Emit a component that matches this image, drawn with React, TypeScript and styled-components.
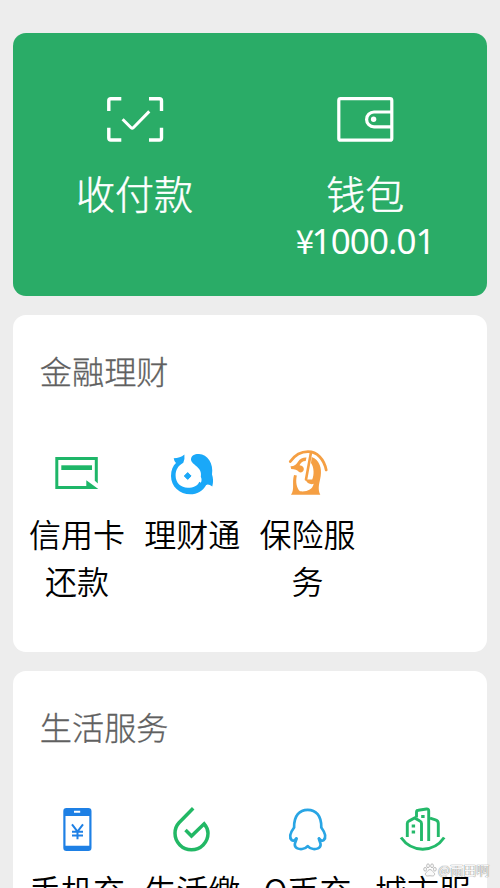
import React from "react";
import styled, { createGlobalStyle } from "styled-components";

const GlobalStyle = createGlobalStyle`
  * { box-sizing: border-box; }
  html, body { margin: 0; padding: 0; background: #ededed; }
  body { font-family: "Noto Sans CJK SC", sans-serif; overflow: hidden; }
`;

const Page = styled.main`
  position: relative;
  width: 500px;
  height: 888px;
  overflow: hidden;
  padding: 33px 13.4px 0 13.3px;
  background: #ededed;
  display: flex;
  flex-direction: column;
  gap: 19px;
`;

const PayCard = styled.section`
  flex: none;
  height: 263.3px;
  padding: 58px 6px 0;
  border-radius: 13px;
  background: #2aac67;
  color: #fff;
  display: grid;
  grid-template-columns: 1fr 1fr;
`;

const PayItem = styled.div`
  display: flex;
  flex-direction: column;
  align-items: center;
`;

const PayLabel = styled.div`
  margin-top: 17px;
  font-size: 39px;
  line-height: 52px;
  font-weight: 300;
  -webkit-text-stroke: 0.5px currentColor;
`;

const Balance = styled.div`
  display: flex;
  align-items: baseline;
  height: 42px;
  font-family: "Noto Sans", sans-serif;
  font-size: 35px;
  line-height: 42px;
  padding-top: 1px;
  letter-spacing: -0.9px;
`;

const Currency = styled.span`
  font-family: "Noto Sans CJK SC", sans-serif;
  font-size: 33px;
  letter-spacing: -2.6px;
`;

const Card = styled.section<{ $height: number }>`
  flex: none;
  height: ${(p) => p.$height}px;
  padding: 31px 6px 0;
  border-radius: 13px;
  background: #fff;
`;

const Title = styled.h2`
  margin: 0 0 0 20.5px;
  font-size: 32.2px;
  line-height: 48px;
  font-weight: 300;
  color: #606060;
  -webkit-text-stroke: 0.3px currentColor;
`;

const Grid = styled.div`
  margin-top: 51px;
  display: grid;
  grid-template-columns: repeat(4, 1fr);
`;

const Service = styled.div`
  display: flex;
  flex-direction: column;
  align-items: center;
`;

const ServiceLabel = styled.div`
  margin-top: 7px;
  width: 100px;
  text-align: center;
  font-size: 32px;
  line-height: 46.5px;
  color: #000;
  font-weight: 350;
`;

const Watermark = styled.div`
  position: absolute;
  left: 423px;
  top: 860px;
  display: flex;
  align-items: center;
  gap: 1px;
  font-size: 13px;
  line-height: 20px;
  white-space: nowrap;
  color: rgba(255, 255, 255, 0.95);
  text-shadow: 0 0 1px rgba(90, 90, 90, 0.8), 0 0 1px rgba(90, 90, 90, 0.6);
`;

const ScanIcon = () => (
  <svg width="58" height="58" viewBox="106 91 58 58" fill="none" stroke="#fff" strokeWidth="3.4">
    <path d="M121.3 98.7h-10.5q-2 0-2 2v10.3M149 98.7h10.5q2 0 2 2v10.3M121.3 140h-10.5q-2 0-2-2v-10.3M149 140h10.5q2 0 2-2v-10.3" />
    <path d="M122.6 119.2l8.5 8.5q1.1 1 2.2 0l16-16.3" strokeWidth="3" />
  </svg>
);

const WalletIcon = () => (
  <svg width="58" height="58" viewBox="336 91 58 58" fill="none" stroke="#fff" strokeWidth="3.2">
    <rect x="338.8" y="98.6" width="53" height="41.6" rx="1.8" />
    <path d="M391.5 112h-17.5a7.4 7.4 0 0 0 0 14.8h17.5" />
    <circle cx="373.6" cy="119.3" r="2.7" fill="#fff" stroke="none" />
  </svg>
);

const CreditIcon = () => (
  <svg width="50" height="58" viewBox="52 445 50 58" fill="#1eb668">
    <path d="M55.3 457H97.8V483.5L94.8 480.8V460H58.3V486H86.3V480.2L98.3 489H55.3z" />
    <path d="M61.3 465.3H92v4.7H61.3z" />
  </svg>
);

const WealthIcon = () => (
  <svg width="50" height="58" viewBox="168 445 50 58" fill="#1aa8f8">
    <path d="M174.7 458.3Q181 458.3 185.4 454.5Q186 459 184.3 462.7C179 465.5 176.6 470 176.6 475.5C176.6 483 182 487.7 188.7 487.7C194.5 487.7 198.7 485.8 200.3 481.7L201.9 482.8C202.8 481 202.8 478.5 201.8 476.8C204 467 192.3 465 192 459.5C192 455.5 196 453.8 200 454C208.5 454.5 214.8 463.5 213 474.5Q215 480 213.3 486.5Q209.5 483.7 207.2 485C203.5 491.5 198 494.3 191.5 494.3C180.5 494.3 172 486.5 172 476C172 470 174 465.8 177 463Q175 461 174.7 458.3z" />
    <path d="M188.7 472.6l3.4 3.4-3.4 3.4-3.4-3.4z" stroke="#1aa8f8" strokeWidth="1" strokeLinejoin="round" />
  </svg>
);

const InsuranceIcon = () => (
  <svg width="50" height="58" viewBox="283 445 50 58" fill="none" stroke="#f59f43" strokeLinecap="round">
    <path d="M290.3 461.5C295 455 301 451.7 308 451.7C317 451.7 324 459 326.2 470" strokeWidth="2.8" />
    <path d="M310.8 453.5L306 479.5" strokeWidth="2.6" />
    <path d="M290.5 466.3C294 466.5 296.5 464.3 298 461.7C300 458.5 303.5 457.2 306.5 457.5L305.7 461C302.5 461 300.5 463 299.5 465.3C302.5 465.5 304.3 467.5 303.7 470C303 472.3 300.5 473.3 298.5 471.5C297.5 469.8 294.5 469.2 291.2 469z" fill="#f59f43" stroke="none" />
    <path d="M311.7 457C319.5 460 322 468 320.7 476C319.5 483.5 317.3 488.5 320.3 494.7H291C295 489.5 291.7 483 294 475L296.8 475.5C295.5 482 296.5 488 300 491.3C307 492 312.5 489.7 313.7 483.8C310.5 485 306.5 483 305.7 479.5H312.2C314.2 475 314.2 467.5 311 463z" fill="#f59f43" stroke="none" />
  </svg>
);

const PhoneIcon = () => (
  <svg width="50" height="58" viewBox="52 800 50 58">
    <path fillRule="evenodd" d="M66.5 807h21.8q3.2 0 3.2 3.2v36.6q0 3.2-3.2 3.2H66.5q-3.2 0-3.2-3.2v-36.6q0-3.2 3.2-3.2zM65.5 815v29.8h23.8V815zM74 809.8h6.2v2H74z" fill="#1e80e5" />
    <path d="M72 823.3l5.5 7.3 5.5-7.3M77.5 830.5v7.7M72 830.7h11M72 834.4h11" fill="none" stroke="#1e80e5" strokeWidth="2" />
  </svg>
);

const DropIcon = () => (
  <svg width="50" height="58" viewBox="168 800 50 58" fill="none" stroke="#22b865" strokeWidth="3.5">
    <path d="M194.2 807.3L180 821.7c-3.2 3.4-4 6.5-4 10.6a16.5 16.5 0 1 0 33 0c0-3.8-1.3-6.6-3.8-9.5L192.5 835l-6-6" />
  </svg>
);

const PenguinIcon = () => (
  <svg width="50" height="58" viewBox="283 800 50 58" fill="none" stroke="#29a5e4" strokeWidth="2.7" strokeLinecap="round" strokeLinejoin="round">
    <path d="M296.3 837.5c-1.2 1.8-3.2 2.7-4.5 1.7-2.8-2.6-1.4-7.7 2.3-12.7-.2-12 5.5-17.6 13.6-17.6s13.8 5.6 13.6 17.6c3.7 5 5.1 10.1 2.3 12.7-1.3 1-3.3.1-4.5-1.7" />
    <path d="M296.5 837.5c.2 1.8-1.9 4-1.7 6.3.3 3.6 4.3 4.5 7.3 4.2 2.5-.2 4.3-1.4 5.6-2.9 1.3 1.5 3.1 2.7 5.6 2.9 3 .3 7-.6 7.3-4.2.2-2.3-1.9-4.5-1.7-6.3" />
  </svg>
);

const CityIcon = () => (
  <svg width="50" height="58" viewBox="398 800 50 58" fill="none" stroke="#24b96a" strokeWidth="2.9">
    <path d="M407.3 836v-13.6q0-1.7 1.5-2.3l5.8-3.1 5.3 3q1.6.8 1.6 2.6V840" />
    <path d="M416.5 816.5v-5.3q0-1.8 1.8-2l8.2-1.2q2.2-.3 2.2 1.8V840" />
    <path d="M430 817.2l5.5 1.7q2.8.8 2.8 3.5V836" />
    <path d="M401 836.5c11 15.5 32.5 15.5 43.2 0" strokeWidth="3" />
    <path d="M411.7 825h3.4M411.7 831h3.4M421.2 815.5h3.4" strokeWidth="3" />
  </svg>
);

const PawIcon = () => (
  <svg width="14" height="14" viewBox="0 0 15 15" fill="#fafafa" stroke="#a9a9a9" strokeWidth=".8">
    <path d="M7.5 7c-2 0-2.2 1.8-3.8 2.9-2.2 1.6-1 4.2 1.3 4 1.8-.3 3.2-.3 5 0 2.3.2 3.5-2.4 1.3-4C9.7 8.8 9.5 7 7.5 7z" />
    <ellipse cx="2.3" cy="6.7" rx="1.5" ry="2" />
    <ellipse cx="5.4" cy="3" rx="1.5" ry="2.1" />
    <ellipse cx="9.7" cy="3" rx="1.5" ry="2.1" />
    <ellipse cx="12.7" cy="6.7" rx="1.5" ry="2" />
  </svg>
);

const finance = [
  { label: "信用卡还款", Icon: CreditIcon },
  { label: "理财通", Icon: WealthIcon },
  { label: "保险服务", Icon: InsuranceIcon },
];

const life = [
  { label: "手机充值", Icon: PhoneIcon },
  { label: "生活缴费", Icon: DropIcon },
  { label: "Q币充值", Icon: PenguinIcon },
  { label: "城市服务", Icon: CityIcon },
];

type SectionProps = { title: string; items: typeof finance; height: number };

const ServiceSection = ({ title, items, height }: SectionProps) => (
  <Card $height={height}>
    <Title>{title}</Title>
    <Grid>
      {items.map(({ label, Icon }) => (
        <Service key={label}>
          <Icon />
          <ServiceLabel>{label}</ServiceLabel>
        </Service>
      ))}
    </Grid>
  </Card>
);

export default function App() {
  return (
    <>
      <GlobalStyle />
      <Page>
        <PayCard>
          <PayItem>
            <ScanIcon />
            <PayLabel>收付款</PayLabel>
          </PayItem>
          <PayItem>
            <WalletIcon />
            <PayLabel>钱包</PayLabel>
            <Balance>
              <Currency>¥</Currency>
              <span>1000.01</span>
            </Balance>
          </PayItem>
        </PayCard>
        <ServiceSection title="金融理财" items={finance} height={337} />
        <ServiceSection title="生活服务" items={life} height={337} />
        <Watermark>
          <PawIcon />
          <span>@雨田啊</span>
        </Watermark>
      </Page>
    </>
  );
}
